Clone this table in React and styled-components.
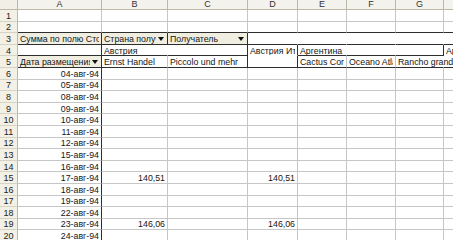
import React from "react";
import styled, { createGlobalStyle } from "styled-components";

const GlobalStyle = createGlobalStyle`
  html, body {
    margin: 0;
    padding: 0;
    background: #fff;
    overflow: hidden;
  }
  body {
    font-family: "Liberation Sans", Arial, sans-serif;
  }
`;

const GRID = "#c6c6c6";
const DARK = "#2e2e2e";
const HEAD_LINE = "#bdb9a8";

const Sheet = styled.div`
  display: grid;
  grid-template-columns: 18px 84px 66px 80px 50px 49px 49px 48px 90px;
  grid-template-rows: 10px repeat(20, 11.6px);
  width: 534px;
  font-size: 8.8px;
  color: #151515;
`;

const Corner = styled.div`
  background: #f1efe6;
  border-right: 1px solid ${HEAD_LINE};
  border-bottom: 1px solid ${HEAD_LINE};
  box-sizing: border-box;
`;

const ColHead = styled.div`
  box-sizing: border-box;
  background: #f3f2ec;
  border-right: 1px solid ${HEAD_LINE};
  border-bottom: 1px solid ${HEAD_LINE};
  display: flex;
  align-items: center;
  justify-content: center;
  line-height: 9px;
  font-size: 9px;
  color: #333;
  overflow: hidden;
`;

const RowHead = styled.div`
  box-sizing: border-box;
  background: #f3f1e6;
  border-right: 1px solid ${HEAD_LINE};
  border-bottom: 1px solid #d6d3c4;
  display: flex;
  align-items: center;
  justify-content: center;
  padding-top: 1px;
  line-height: 10px;
  font-size: 9px;
  color: #222;
`;

const Cell = styled.div`
  box-sizing: border-box;
  display: flex;
  align-items: center;
  justify-content: ${(p) => (p.$num ? "flex-end" : "flex-start")};
  padding: 1px 2px 0 2px;
  background: ${(p) => (p.$btn ? "#f0eee1" : "transparent")};
  border-right: 1px solid ${(p) => p.$r};
  border-bottom: 1px solid ${(p) => p.$b};
  white-space: nowrap;
  overflow: ${(p) => (p.$spill ? "visible" : "hidden")};
  line-height: 10px;
`;

const CellText = styled.span`
  flex: 1 1 auto;
  min-width: 0;
  overflow: ${(p) => (p.$spill ? "visible" : "hidden")};
  text-align: ${(p) => (p.$num ? "right" : "left")};
`;

const Arrow = styled.span`
  flex: none;
  width: 0;
  height: 0;
  margin: 0 1px 0 2px;
  border-left: 3.5px solid transparent;
  border-right: 3.5px solid transparent;
  border-top: 4px solid #111;
`;

const letters = ["A", "B", "C", "D", "E", "F", "G", "H"];
const dates = [
  "04", "05", "08", "09", "10", "11", "12", "15",
  "16", "17", "18", "19", "22", "23", "24",
];

const W = "#ffffff";

function buildRow(n) {
  const plain = () => ({ t: "", r: GRID, b: GRID });
  const row = letters.map(plain);

  if (n === 2) {
    row.forEach((c) => (c.b = DARK));
  }
  if (n === 3) {
    row[0] = { t: "Сумма по полю Стоимость доставки", r: DARK, b: DARK, btn: true };
    row[1] = { t: "Страна получателя", r: DARK, b: DARK, btn: true, arrow: true };
    row[2] = { t: "Получатель", r: DARK, b: DARK, btn: true, arrow: true };
    for (let i = 3; i < 8; i++) row[i] = { t: "", r: W, b: DARK };
  }
  if (n === 4) {
    row[0] = { t: "", r: DARK, b: DARK };
    row[1] = { t: "Австрия", r: W, b: DARK };
    row[2] = { t: "", r: DARK, b: DARK };
    row[3] = { t: "Австрия Итог", r: DARK, b: W };
    row[4] = { t: "Аргентина", r: W, b: DARK };
    row[5] = { t: "", r: W, b: DARK };
    row[6] = { t: "", r: DARK, b: DARK };
    row[7] = { t: "Аргентина Итог", r: DARK, b: W };
  }
  if (n === 5) {
    row[0] = { t: "Дата размещения", r: DARK, b: DARK, btn: true, arrow: true };
    row[1] = { t: "Ernst Handel", r: GRID, b: DARK };
    row[2] = { t: "Piccolo und mehr", r: DARK, b: DARK };
    row[3] = { t: "", r: DARK, b: DARK };
    row[4] = { t: "Cactus Comidas para llevar", r: GRID, b: DARK };
    row[5] = { t: "Oceano Atlántico Ltda.", r: GRID, b: DARK };
    row[6] = { t: "Rancho grande", r: "transparent", b: DARK, spill: true };
    row[7] = { t: "", r: DARK, b: DARK };
  }
  if (n >= 6) {
    row[0] = { t: `${dates[n - 6]}-авг-94`, r: DARK, b: GRID, num: true };
  }
  if (n === 15 || n === 19) {
    const v = n === 15 ? "140,51" : "146,06";
    row[1] = { ...row[1], t: v, num: true };
    row[3] = { ...row[3], t: v, num: true };
  }
  return row;
}

const rows = Array.from({ length: 20 }, (_, i) => i + 1);

export default function App() {
  return (
    <>
      <GlobalStyle />
      <Sheet>
        <Corner />
        {letters.map((l) => (
          <ColHead key={l}>{l}</ColHead>
        ))}
        {rows.map((n) => (
          <React.Fragment key={n}>
            <RowHead>{n}</RowHead>
            {buildRow(n).map((c, i) => (
              <Cell
                key={i}
                $r={c.r}
                $b={c.b}
                $btn={c.btn}
                $num={c.num}
                $spill={c.spill}
              >
                <CellText $num={c.num} $spill={c.spill}>
                  {c.t}
                </CellText>
                {c.arrow && <Arrow />}
              </Cell>
            ))}
          </React.Fragment>
        ))}
      </Sheet>
    </>
  );
}
